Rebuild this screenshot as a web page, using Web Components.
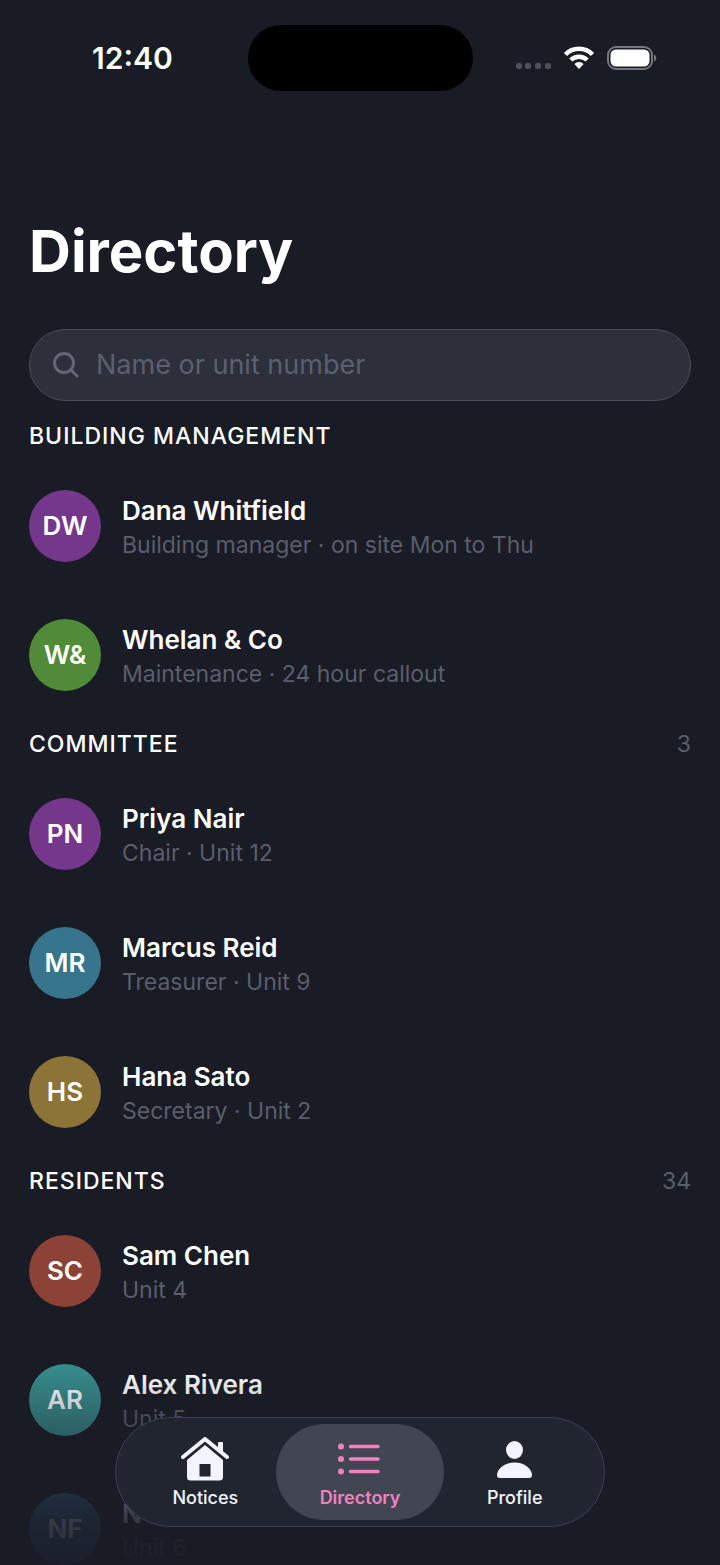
<!DOCTYPE html>
<html lang="en">
<head>
<meta charset="UTF-8">
<meta name="viewport" content="width=device-width, initial-scale=1.0">
<title>Directory</title>
<style>
    :root {
        --bg: #191b25;
        --text: #ffffff;
        --muted: #595e6d;
        --accent: #f67fc2;
    }
    body {
        margin: 0;
        background: var(--bg);
        color: var(--text);
        font-family: Inter, "Liberation Sans", sans-serif;
    }
</style>
</head>
<body>
<directory-app>
    <status-bar time="12:40"></status-bar>
    <page-title>Directory</page-title>
    <search-field placeholder="Name or unit number"></search-field>
    <contact-section label="Building management">
        <contact-row initials="DW" name="Dana Whitfield" color="#75378c">Building manager · on site Mon to Thu</contact-row>
        <contact-row initials="W&amp;" name="Whelan &amp; Co" color="#508c37">Maintenance · 24 hour callout</contact-row>
    </contact-section>
    <contact-section label="Committee" count="3">
        <contact-row initials="PN" name="Priya Nair" color="#75378c">Chair · Unit 12</contact-row>
        <contact-row initials="MR" name="Marcus Reid" color="#37758c">Treasurer · Unit 9</contact-row>
        <contact-row initials="HS" name="Hana Sato" color="#8c7337">Secretary · Unit 2</contact-row>
    </contact-section>
    <contact-section label="Residents" count="34">
        <contact-row initials="SC" name="Sam Chen" color="#8c4237">Unit 4</contact-row>
        <contact-row initials="AR" name="Alex Rivera" color="#378c8c">Unit 5</contact-row>
        <contact-row initials="NF" name="N" color="#37648c">Unit 6</contact-row>
    </contact-section>
    <tab-bar slot="tabs">
        <tab-item label="Notices">
            <svg viewBox="0 0 48 44" width="48" height="44" fill="currentColor" aria-hidden="true">
                <path d="M38 5h3a1 1 0 0 1 1 1v12l-5-4V6a1 1 0 0 1 1-1z"/>
                <path d="M2 20 24 2l22 18" fill="none" stroke="currentColor" stroke-width="4" stroke-linecap="round" stroke-linejoin="round"/>
                <path fill-rule="evenodd" d="M24 8 42 23v17a3.500 3.500 0 0 1-3.500 3.500h-29A3.500 3.500 0 0 1 6 40V23zM18.500 27v12.500h11V27z"/>
            </svg>
        </tab-item>
        <tab-item label="Directory" active>
            <svg viewBox="0 0 48 44" width="48" height="44" fill="currentColor" aria-hidden="true">
                <circle cx="5" cy="9.5" r="3"/><circle cx="5" cy="22" r="3"/><circle cx="5" cy="34.5" r="3"/>
                <path d="M14.500 9.500H42M14.500 22H42M14.500 34.500H42" stroke="currentColor" stroke-width="3.500" stroke-linecap="round"/>
            </svg>
        </tab-item>
        <tab-item label="Profile">
            <svg viewBox="0 0 48 44" width="48" height="44" fill="currentColor" aria-hidden="true">
                <ellipse cx="23.5" cy="13" rx="8.5" ry="9"/>
                <path d="M9 41c-2 0-3-1-3-3 0-6 7.500-12.500 17.500-12.500S41 32 41 38c0 2-1 3-3 3z"/>
            </svg>
        </tab-item>
    </tab-bar>
</directory-app>

<script>
class DirectoryApp extends HTMLElement {
    constructor() {
        super();
        this.attachShadow({ mode: 'open' });
    }

    connectedCallback() {
        this.shadowRoot.innerHTML = /* html */`
        <style>
            :host {
                display: block;
                height: 100vh;
                overflow: hidden;
                position: relative;
            }
            main {
                display: flex;
                flex-direction: column;
                padding: 0 29px;
            }
            .fade {
                position: absolute;
                inset: auto 0 0;
                height: 200px;
                background: linear-gradient(rgba(25, 27, 37, 0), rgba(25, 27, 37, 0.85) 75%, rgba(25, 27, 37, 0.95));
                pointer-events: none;
            }
            .tabs {
                position: absolute;
                inset: auto 0 38px;
                display: flex;
                justify-content: center;
            }
        </style>
        <main><slot></slot></main>
        <div class="fade"></div>
        <div class="tabs"><slot name="tabs"></slot></div>
        `;
    }
}

class StatusBar extends HTMLElement {
    constructor() {
        super();
        this.attachShadow({ mode: 'open' });
    }

    connectedCallback() {
        this.shadowRoot.innerHTML = /* html */`
        <style>
            :host {
                display: grid;
                grid-template-columns: 1fr 225px 1fr;
                align-items: center;
                padding: 25px 0 124px;
            }
            time {
                padding-left: 63px;
                font-size: 30px;
                font-weight: 600;
            }
            .island {
                height: 66px;
                border-radius: 33px;
                background: #000;
            }
            .icons {
                display: flex;
                align-items: center;
                gap: 12px;
                padding-left: 42px;
            }
        </style>
        <time>${this.getAttribute('time')}</time>
        <div class="island"></div>
        <div class="icons">
            <svg width="36" height="24" viewBox="0 0 36 24" fill="#4d4f5b">
                <rect x="1" y="17" width="6" height="6" rx="2"/><rect x="10" y="17" width="6" height="6" rx="2"/>
                <rect x="20" y="17" width="6" height="6" rx="2"/><rect x="30" y="17" width="6" height="6" rx="2"/>
            </svg>
            <svg width="32" height="24" viewBox="0 0 32 24" fill="none" stroke="#fff" stroke-width="4.5">
                <path d="M2.500 8.500a19 19 0 0 1 27 0M7.800 14a11.800 11.800 0 0 1 16.400 0"/>
                <path d="M16 23l-4.600-5a6.500 6.500 0 0 1 9.200 0z" fill="#fff" stroke="none"/>
            </svg>
            <svg width="50" height="24" viewBox="0 0 50 24">
                <rect x="1" y="1" width="44" height="22" rx="8" fill="none" stroke="#747680" stroke-width="2"/>
                <rect x="3.5" y="3.5" width="39" height="17" rx="5.5" fill="#fff"/>
                <path d="M47 8.500c3 1 3 6 0 7z" fill="#747680"/>
            </svg>
        </div>
        `;
    }
}

class PageTitle extends HTMLElement {
    constructor() {
        super();
        this.attachShadow({ mode: 'open' });
    }

    connectedCallback() {
        this.shadowRoot.innerHTML = /* html */`
        <style>
            :host { display: block; padding-bottom: 42px; }
            h1 {
                margin: 0;
                font-size: 58px;
                font-weight: 700;
                line-height: 72px;
            }
        </style>
        <h1><slot></slot></h1>
        `;
    }
}

class SearchField extends HTMLElement {
    constructor() {
        super();
        this.attachShadow({ mode: 'open' });
    }

    connectedCallback() {
        const placeholder = this.getAttribute('placeholder');
        this.shadowRoot.innerHTML = /* html */`
        <style>
            :host { display: block; margin-bottom: 10px; }
            label {
                box-sizing: border-box;
                display: flex;
                align-items: center;
                gap: 16px;
                height: 72px;
                padding: 0 22px;
                border: 1px solid #4a4d5a;
                border-radius: 36px;
                background: #2d2f3a;
                color: #626776;
            }
            input {
                flex: 1;
                min-width: 0;
                padding: 0;
                border: 0;
                outline: 0;
                background: none;
                color: #fff;
                font: 400 27px/34px Inter, "Liberation Sans", sans-serif;
            }
            input::placeholder { color: #5a6070; opacity: 1; }
        </style>
        <label>
            <svg width="28" height="28" viewBox="0 0 28 28" fill="none" stroke="currentColor" stroke-width="3" aria-hidden="true">
                <circle cx="12" cy="12" r="9.5"/>
                <path d="M19 19l7 7"/>
            </svg>
            <input type="search" placeholder="${placeholder}" aria-label="${placeholder}">
        </label>
        `;
    }
}

class ContactSection extends HTMLElement {
    constructor() {
        super();
        this.attachShadow({ mode: 'open' });
    }

    connectedCallback() {
        this.shadowRoot.innerHTML = /* html */`
        <style>
            :host { display: block; }
            header {
                display: flex;
                align-items: center;
                justify-content: space-between;
                height: 50px;
                font-size: 23px;
            }
            h2 {
                margin: 0;
                font-size: 23px;
                font-weight: 500;
                letter-spacing: 1px;
                text-transform: uppercase;
            }
            span { color: var(--muted); }
        </style>
        <header>
            <h2>${this.getAttribute('label')}</h2>
            <span>${this.getAttribute('count') || ''}</span>
        </header>
        <slot></slot>
        `;
    }
}

class ContactRow extends HTMLElement {
    constructor() {
        super();
        this.attachShadow({ mode: 'open' });
    }

    connectedCallback() {
        this.shadowRoot.innerHTML = /* html */`
        <style>
            :host {
                display: flex;
                align-items: center;
                gap: 21px;
                height: 129px;
            }
            .avatar {
                display: grid;
                place-items: center;
                width: 72px;
                height: 72px;
                border-radius: 50%;
                font-size: 26px;
                font-weight: 600;
            }
            .text { padding-top: 4px; }
            h3, p { margin: 0; line-height: 34px; }
            h3 {
                font-size: 26px;
                font-weight: 600;
            }
            p {
                font-size: 23px;
                color: var(--muted);
            }
        </style>
        <div class="avatar"></div>
        <div class="text">
            <h3></h3>
            <p><slot></slot></p>
        </div>
        `;
        const avatar = this.shadowRoot.querySelector('.avatar');
        avatar.textContent = this.getAttribute('initials');
        avatar.style.background = this.getAttribute('color');
        this.shadowRoot.querySelector('h3').textContent = this.getAttribute('name');
    }
}

class TabBar extends HTMLElement {
    constructor() {
        super();
        this.attachShadow({ mode: 'open' });
    }

    connectedCallback() {
        this.shadowRoot.innerHTML = /* html */`
        <style>
            nav {
                box-sizing: border-box;
                display: flex;
                width: 490px;
                max-width: 100vw;
                height: 110px;
                padding: 6px 12px;
                border: 1px solid #3a3f58;
                border-radius: 55px;
                background: #212530;
            }
        </style>
        <nav><slot></slot></nav>
        `;
    }
}

class TabItem extends HTMLElement {
    constructor() {
        super();
        this.attachShadow({ mode: 'open' });
    }

    connectedCallback() {
        this.shadowRoot.innerHTML = /* html */`
        <style>
            :host { display: flex; flex: 1; color: #f2f5ff; }
            :host([active]) { color: var(--accent); }
            a {
                flex: 1;
                display: flex;
                flex-direction: column;
                align-items: center;
                gap: 5px;
                padding-top: 13px;
                color: inherit;
                font-size: 18px;
                font-weight: 500;
                line-height: 24px;
                text-decoration: none;
            }
            /* the active pill is a bit wider than its column */
            :host([active]) a {
                margin: 0 -7px;
                border-radius: 48px;
                background: #424552;
                font-weight: 600;
            }
        </style>
        <a href="#"><slot></slot>${this.getAttribute('label')}</a>
        `;
    }
}

customElements.define('directory-app', DirectoryApp);
customElements.define('status-bar', StatusBar);
customElements.define('page-title', PageTitle);
customElements.define('search-field', SearchField);
customElements.define('contact-section', ContactSection);
customElements.define('contact-row', ContactRow);
customElements.define('tab-bar', TabBar);
customElements.define('tab-item', TabItem);
</script>
</body>
</html>
